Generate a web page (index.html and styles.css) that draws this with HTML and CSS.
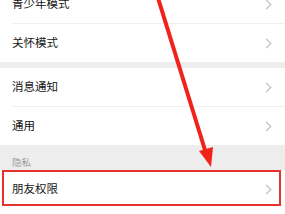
FILE: index.html
```html
<!DOCTYPE html>
<html>
<head>
<meta charset="utf-8">
<link rel="stylesheet" href="styles.css">
</head>
<body>
<div class="page">
  <div class="list shifted">
    <div class="row sep"><span class="label">青少年模式</span><span class="chev"></span></div>
    <div class="row"><span class="label">关怀模式</span><span class="chev"></span></div>
  </div>
  <div class="gap"></div>
  <div class="list">
    <div class="row sep"><span class="label">消息通知</span><span class="chev"></span></div>
    <div class="row"><span class="label">通用</span><span class="chev"></span></div>
  </div>
  <div class="section-title">隐私</div>
  <div class="list">
    <div class="row"><span class="label">朋友权限</span><span class="chev"></span></div>
  </div>
  <div class="highlight"></div>
  <svg class="arrow" width="285" height="214" viewBox="0 0 285 214">
    <line x1="158" y1="-2" x2="205" y2="150" stroke="#f0231b" stroke-width="4" stroke-linecap="butt"/>
    <polygon points="199,151 213,147 211,167" fill="#f0231b"/>
  </svg>
</div>
</body>
</html>
```
FILE: styles.css
```css
html, body {
  margin: 0;
  padding: 0;
  background: #ffffff;
}
body {
  width: 285px;
  height: 214px;
  overflow: hidden;
  font-family: "Noto Sans CJK SC", "Noto Sans", sans-serif;
}
.page {
  position: relative;
  width: 285px;
  height: 214px;
  overflow: hidden;
}
.list {
  background: #ffffff;
  display: flex;
  flex-direction: column;
}
.shifted {
  margin-top: -15px;
}
.row {
  height: 38px;
  display: flex;
  align-items: center;
  justify-content: space-between;
  padding: 0 13px 0 12px;
  position: relative;
}
.row.sep::after {
  content: "";
  position: absolute;
  left: 12px;
  right: 0;
  bottom: -1px;
  height: 1px;
  background: #efefef;
}
.row.sep {
  margin-bottom: 1px;
}
.label {
  font-size: 11.5px;
  color: #161616;
  line-height: 1;
}
.chev {
  width: 6px;
  height: 6px;
  border-top: 1px solid #b5b5b5;
  border-right: 1px solid #b5b5b5;
  transform: rotate(45deg);
  margin-right: 2px;
}
.gap {
  height: 6px;
  background: #ededed;
}
.section-title {
  background: #ededed;
  height: 25px;
  box-sizing: border-box;
  padding: 12px 0 0 12px;
  font-size: 9.5px;
  line-height: 10px;
  color: #9a9a9a;
}
.highlight {
  position: absolute;
  left: 2px;
  top: 170px;
  width: 279px;
  height: 36px;
  box-sizing: border-box;
  border: 2.5px solid #e5322d;
}
.arrow {
  position: absolute;
  left: 0;
  top: 0;
}
```
